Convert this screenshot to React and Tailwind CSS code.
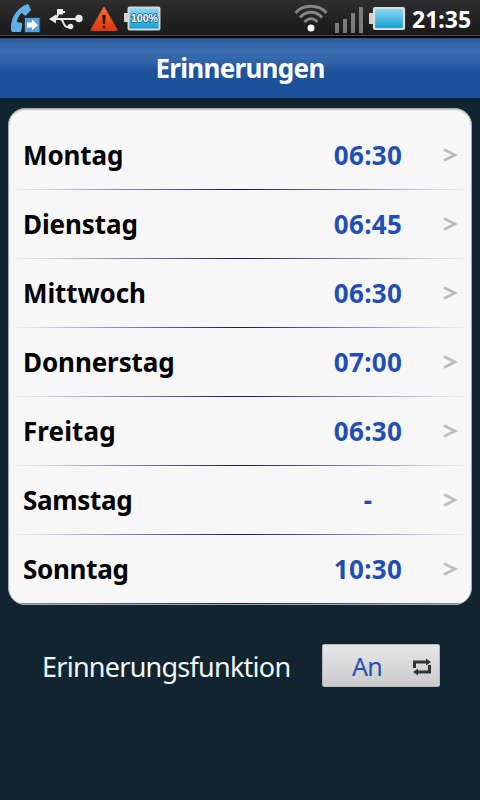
import React from 'react';

const reminders = [
    { day: 'Montag', time: '06:30', dayClass: 'tracking-[-0.1px]' },
    { day: 'Dienstag', time: '06:45', dayClass: 'tracking-[-0.1px]' },
    { day: 'Mittwoch', time: '06:30', dayClass: 'tracking-[-0.1px]' },
    { day: 'Donnerstag', time: '07:00', dayClass: 'tracking-[-0.1px]' },
    { day: 'Freitag', time: '06:30', dayClass: 'tracking-[0.1px]' },
    { day: 'Samstag', time: '-', dayClass: 'tracking-[-0.3px]' },
    { day: 'Sonntag', time: '10:30', dayClass: 'tracking-[-0.3px]' },
];

const LeftIcons = () => (
    <svg width="170" height="36" viewBox="0 0 170 36" className="block">
        <defs>
            <linearGradient id="warn" x1="0" y1="0" x2="0" y2="1">
                <stop offset="0" stopColor="#f4683c" />
                <stop offset="1" stopColor="#e03a08" />
            </linearGradient>
            <linearGradient id="cell" x1="0" y1="0" x2="0" y2="1">
                <stop offset="0" stopColor="#8fd8f2" />
                <stop offset="1" stopColor="#0f9fd4" />
            </linearGradient>
        </defs>
        {/* forwarded call */}
        <path
            d="M12 31.500 C9.500 23 15 8 28 4.500 L30.500 10 L25.500 15.500 L21.500 12.500 C18.500 15 16.500 19 16.500 22.500 L22 23.500 L20.500 31.500 Z"
            fill="#64aee6"
            stroke="#64aee6"
            strokeLinejoin="round"
        />
        <rect x="24.5" y="17.5" width="15.500" height="15" fill="#5b9fdd" stroke="#24374a" />
        <path d="M27 22.5 H32 V19.5 L38 25 L32 30.5 V27.5 H27 Z" fill="#fff" />
        {/* usb */}
        <g stroke="#e8e8e8" strokeWidth="2" fill="none">
            <path d="M53 19 H78" />
            <path d="M54 19 C58 19 57 12 61 12 H65" />
            <path d="M60 19 C64 19 63 27 67 27 H71" />
        </g>
        <path d="M49 19 L56 14.500 V23.500 Z" fill="#e8e8e8" />
        <rect x="57" y="9" width="6" height="5.5" fill="#e8e8e8" />
        <circle cx="79" cy="18.500" r="3.700" fill="#e8e8e8" />
        <circle cx="70.500" cy="26.500" r="2.800" fill="#e8e8e8" />
        {/* warning */}
        <path d="M104 8 L116.500 30 H91.500 Z" fill="url(#warn)" stroke="url(#warn)" strokeWidth="2" strokeLinejoin="round" />
        <path d="M102.300 15 H105.700 L105 24 H103 Z" fill="#3a1109" />
        <circle cx="104" cy="27" r="1.500" fill="#3a1109" />
        {/* battery level */}
        <rect x="124" y="13" width="5" height="9" fill="#d3d3d3" />
        <rect x="128.500" y="7.500" width="31" height="22" rx="1" fill="url(#cell)" stroke="#d8d8d8" strokeWidth="2" />
        <text
            x="144.500"
            y="22"
            textAnchor="middle"
            textLength="27"
            lengthAdjust="spacingAndGlyphs"
            fontSize="10.500"
            fontWeight="700"
            fontFamily="Liberation Sans, sans-serif"
            fill="#fff"
            stroke="#1b5f83"
            strokeWidth="1.500"
            paintOrder="stroke"
        >
            100%
        </text>
    </svg>
);

const RightIcons = () => (
    <svg width="116" height="36" viewBox="0 0 116 36" className="block">
        <g fill="none" stroke="#858585" strokeWidth="2.800">
            <path d="M1.500 13 C9 4 25 4 32.500 13" />
            <path d="M6 17.500 C12 10.500 22 10.500 28 17.500" />
            <path d="M10.500 22 C14.500 17.500 19.500 17.500 23.500 22" />
        </g>
        <circle cx="17" cy="28" r="3.500" fill="#fff" />
        <g fill="#7b7b7b">
            <rect x="41" y="23" width="4" height="10" />
            <rect x="49" y="19" width="4" height="14" />
            <rect x="57" y="13" width="4" height="20" />
            <rect x="65" y="7" width="4" height="26" />
        </g>
        <rect x="75" y="13" width="5" height="11" fill="#d3d3d3" />
        <rect x="80" y="8" width="30" height="21" rx="1" fill="url(#cell)" stroke="#dedede" strokeWidth="2.200" />
    </svg>
);

const StatusBar = () => (
    <div className="flex h-[38px] items-start border-b-2 border-black bg-linear-to-b from-[#2e2e2e] to-[#191919] shadow-[inset_0_-1px_0_#484848]">
        <LeftIcons />
        <div className="ml-auto flex items-start">
            <RightIcons />
            <span className="w-[70px] pt-[3px] pl-[2px] text-[23px] leading-[33px] font-bold whitespace-nowrap text-white">
                21:35
            </span>
        </div>
    </div>
);

const ReminderRow = ({ reminder, last }) => (
    <li className="flex h-[69px] flex-col">
        <div className="flex h-[68px] items-center pl-[14px]">
            <span className={`w-[310px] text-[26px] font-bold text-black ${reminder.dayClass}`}>{reminder.day}</span>
            <span className="w-[70px] text-center text-[26px] font-bold tracking-[0.3px] whitespace-nowrap text-[#1f4fb5]">
                {reminder.time}
            </span>
            <svg width="16" height="18" viewBox="0 0 16 18" className="ml-[39px]">
                <path d="M2 3.500 L13 9 L2 14.500" fill="none" stroke="#bdbdbd" strokeWidth="2.600" />
            </svg>
        </div>
        <div
            className={
                last
                    ? 'h-px bg-linear-to-r from-[#8f959c] via-[#1a1490] to-[#8f959c]'
                    : 'h-px bg-linear-to-r from-transparent via-[#1a1470] to-transparent'
            }
        />
    </li>
);

const App = () => {
    return (
        <div className="flex h-[800px] w-[480px] flex-col overflow-hidden bg-[#112531] font-['Noto_Sans',sans-serif]">
            <StatusBar />
            <header className="flex h-[60px] items-center justify-center bg-[linear-gradient(to_bottom,#2c568b_0%,#3668a8_10%,#3a6fb3_22%,#3062a8_40%,#1c539c_55%,#19519c_100%)]">
                <h1 className="text-[26px] font-bold tracking-[-0.7px] whitespace-nowrap text-white">Erinnerungen</h1>
            </header>

            <ul className="mx-2 mt-[10px] h-[497px] overflow-hidden rounded-[17px] border border-[#a4a9ac] bg-[#f7f7f7] pt-[12px] shadow-[inset_0_1px_1px_#c4c4c4]">
                {reminders.map((reminder, index) => (
                    <ReminderRow key={reminder.day} reminder={reminder} last={index === reminders.length - 1} />
                ))}
            </ul>

            <div className="mt-[39px] flex items-center pl-[42px]">
                <span className="w-[280px] pt-[3px] text-[27px] tracking-[-0.75px] whitespace-nowrap text-[#f2f7f8]">
                    Erinnerungsfunktion
                </span>
                <button className="flex h-[43px] w-[118px] items-center rounded-[2px] border border-[#b4b8ba] bg-linear-to-b from-[#e6e6e6] to-[#cbcbcb]">
                    <span className="w-[88px] pt-[2px] text-center text-[25px] tracking-[-0.8px] text-[#1f4fb5]">An</span>
                    <svg width="20" height="18" viewBox="0 0 20 18" className="mt-[2px] ml-[1px]">
                        <g fill="none" stroke="#333" strokeWidth="3">
                            <path d="M2.500 10 V4 H15" />
                            <path d="M17.500 7 V14 H5" />
                        </g>
                        <path d="M14 0.500 L19 4 L14 7.500 Z M6 10.500 L1 14 L6 17.500 Z" fill="#333" />
                    </svg>
                </button>
            </div>
        </div>
    );
};

export default App;
